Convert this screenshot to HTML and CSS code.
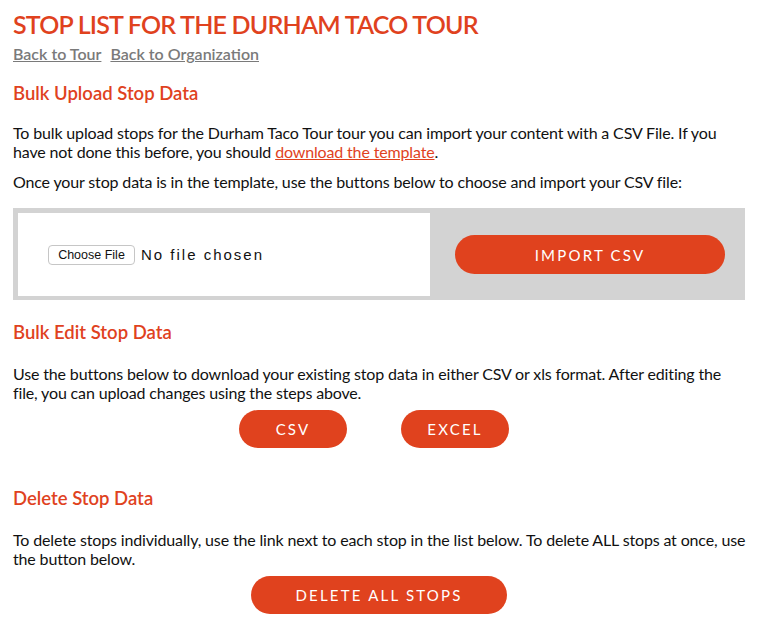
FILE: index.html
```html
<!DOCTYPE html>
<html>
<head>
<meta charset="utf-8">
<title>Stop List</title>
<link rel="stylesheet" href="styles.css">
</head>
<body>
<div class="page">
  <h1 class="title">STOP LIST FOR THE DURHAM TACO TOUR</h1>
  <div class="links">
    <a href="#" class="back">Back to Tour</a>
    <a href="#" class="back">Back to Organization</a>
  </div>

  <h2 class="section first">Bulk Upload Stop Data</h2>
  <p class="text p1">To bulk upload stops for the Durham Taco Tour tour you can import your content with a CSV File. If you have not done this before, you should <a href="#" class="tpl">download the template</a>.</p>
  <p class="text p2">Once your stop data is in the template, use the buttons below to choose and import your CSV file:</p>

  <div class="upload">
    <div class="filebox">
      <span class="choose">Choose File</span>
      <span class="nofile">No file chosen</span>
    </div>
    <div class="importwrap">
      <a href="#" class="btn import">IMPORT CSV</a>
    </div>
  </div>

  <h2 class="section">Bulk Edit Stop Data</h2>
  <p class="text p3">Use the buttons below to download your existing stop data in either CSV or xls format. After editing the file, you can upload changes using the steps above.</p>
  <div class="btnrow">
    <a href="#" class="btn small">CSV</a>
    <a href="#" class="btn small">EXCEL</a>
  </div>

  <h2 class="section del">Delete Stop Data</h2>
  <p class="text p3 wide">To delete stops individually, use the link next to each stop in the list below. To delete ALL stops at once, use the button below.</p>
  <div class="btnrow single">
    <a href="#" class="btn delete">DELETE ALL STOPS</a>
  </div>
</div>
</body>
</html>
```

FILE: styles.css
```css
html, body {
  margin: 0;
  padding: 0;
  background: #ffffff;
}
body {
  font-family: Lato, "Liberation Sans", sans-serif;
  color: #111;
}
.page {
  padding: 0 13px;
}
.title {
  margin: 7px 0 0;
  font-size: 25px;
  line-height: 34px;
  font-weight: 600;
  letter-spacing: -0.8px;
  color: #e0421e;
}
.links {
  margin-top: 3px;
  display: flex;
  gap: 9px;
  font-size: 16px;
  line-height: 20px;
  font-weight: 600;
}
.back {
  color: #7a7a7a;
  text-decoration: underline;
}
.section {
  margin: 20px 0 0;
  font-size: 18.5px;
  line-height: 24px;
  font-weight: 600;
  letter-spacing: 0;
  color: #e0421e;
}
.section.first {
  margin-top: 17px;
}
.section.del {
  margin-top: 38px;
}
.text {
  margin: 0;
  font-size: 16px;
  line-height: 19px;
  letter-spacing: -0.15px;
}
.text.wide {
  margin-right: -8px;
}
.p1 {
  margin-top: 17.5px;
}
.p2 {
  margin-top: 11px;
}
.p3 {
  margin-top: 19.5px;
}
.tpl {
  color: #e0421e;
  text-decoration: underline;
}
.upload {
  margin-top: 17.5px;
  background: #d3d3d3;
  padding: 5px 5px 4px;
  display: flex;
  align-items: center;
}
.filebox {
  background: #fff;
  width: 412px;
  height: 83px;
  box-sizing: border-box;
  padding-left: 30px;
  display: flex;
  align-items: center;
}
.choose {
  display: inline-block;
  box-sizing: border-box;
  height: 20px;
  width: 87px;
  border: 1px solid #c6c6c6;
  border-radius: 4px;
  background: #fff;
  font-family: "Liberation Sans", Arial, sans-serif;
  font-size: 12.5px;
  line-height: 18px;
  text-align: center;
  color: #111;
}
.nofile {
  margin-left: 6px;
  font-family: "Liberation Sans", Arial, sans-serif;
  font-size: 15px;
  letter-spacing: 2px;
  color: #111;
}
.importwrap {
  padding-left: 25px;
}
.btn {
  display: inline-flex;
  align-items: center;
  justify-content: center;
  box-sizing: border-box;
  background: #e0421e;
  color: #fff;
  text-decoration: none;
  font-family: Lato, "Liberation Sans", sans-serif;
  font-size: 15px;
  letter-spacing: 2.2px;
  border-radius: 20px;
}
.import {
  width: 270px;
  height: 39px;
}
.btnrow {
  margin-top: 8.5px;
  display: flex;
  justify-content: center;
  gap: 54px;
  padding-right: 10px;
}
.btnrow.single {
  padding-right: 0;
}
.small {
  width: 108px;
  height: 38px;
}
.delete {
  width: 256px;
  height: 38px;
}
```
